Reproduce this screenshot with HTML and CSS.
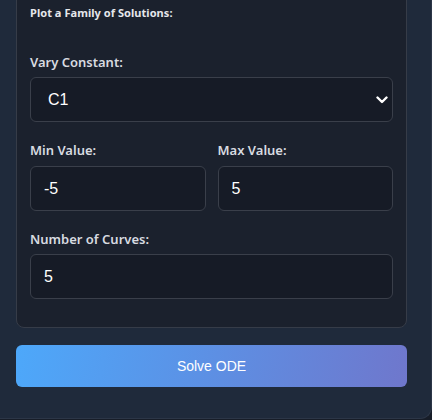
FILE: index.html
```html
<!DOCTYPE html>
<html lang="en">
<head>
    <meta charset="UTF-8">
    <meta name="viewport" content="width=device-width, initial-scale=1.0">
    <title>ODE Solver</title>
    <link rel="stylesheet" href="styles.css">
</head>
<body>
    <div class="panel">
        <div class="family-card">
            <h4 class="card-title">Plot a Family of Solutions:</h4>

            <div class="form-group">
                <label for="vary-constant">Vary Constant:</label>
                <div class="select-wrap">
                    <select id="vary-constant">
                        <option>C1</option>
                        <option>C2</option>
                    </select>
                    <svg class="chevron" width="12" height="8" viewBox="0 0 12 8">
                        <path d="M1.5 1.5 L6 6 L10.5 1.5" fill="none" stroke="#ffffff" stroke-width="2.4" stroke-linecap="round" stroke-linejoin="round"/>
                    </svg>
                </div>
            </div>

            <div class="form-row">
                <div class="form-group">
                    <label for="min-value">Min Value:</label>
                    <input type="text" id="min-value" value="-5">
                </div>
                <div class="form-group">
                    <label for="max-value">Max Value:</label>
                    <input type="text" id="max-value" value="5">
                </div>
            </div>

            <div class="form-group">
                <label for="num-curves">Number of Curves:</label>
                <input type="text" id="num-curves" value="5">
            </div>
        </div>

        <button class="solve-btn">Solve ODE</button>
    </div>
</body>
</html>
```

FILE: styles.css
```css
body {
    margin: 0;
    padding: 0;
    background-color: #171d28;
    font-family: "Noto Sans", "Open Sans", sans-serif;
}

.panel {
    margin-top: -20px;
    width: 391px;
    padding: 0 24px 31px 16px;
    background-color: #1f2a3b;
    border-right: 1px solid #2c3647;
    border-bottom: 1px solid #2c3647;
    border-radius: 0 0 12px 0;
}

.family-card {
    background-color: #1b212d;
    border: 1px solid #363c48;
    border-radius: 8px;
    padding: 25px 13px 10px 13px;
}

.card-title {
    margin: 0 0 32px 0;
    font-size: 11px;
    line-height: 14px;
    font-weight: 700;
    color: #e5e7eb;
    letter-spacing: 0.05px;
}

.form-group {
    display: flex;
    flex-direction: column;
    margin-bottom: 18px;
}

.form-group label {
    font-size: 13px;
    line-height: 20px;
    font-weight: 600;
    color: #d8dbe0;
    margin-bottom: 5px;
}

.form-row {
    display: grid;
    grid-template-columns: 1fr 1fr;
    gap: 12px;
}

.form-row .form-group label {
    margin-bottom: 6px;
}

input,
select {
    box-sizing: border-box;
    width: 100%;
    height: 45px;
    padding: 0 13px;
    background-color: #161b26;
    border: 1px solid #3a3f4a;
    border-radius: 6px;
    color: #ffffff;
    font-family: "Liberation Sans", Arial, sans-serif;
    font-size: 16px;
    outline: none;
}

select {
    appearance: none;
    padding-left: 17px;
}

.select-wrap {
    position: relative;
}

.chevron {
    position: absolute;
    right: 5px;
    top: 19px;
}

.solve-btn {
    display: block;
    width: 100%;
    height: 42px;
    margin-top: 17px;
    border: none;
    border-radius: 6px;
    background: linear-gradient(100deg, #4da8fa 0%, #5b92e6 45%, #6f77cc 100%);
    color: #ffffff;
    font-family: "Liberation Sans", Arial, sans-serif;
    font-size: 14px;
    cursor: pointer;
}
```
